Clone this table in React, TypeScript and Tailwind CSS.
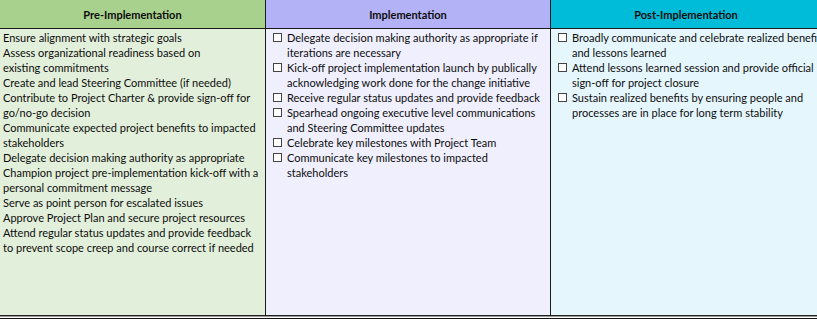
import React from "react";

// each entry is one bullet, each string inside is one printed line
const pre: string[][] = [
  ["Ensure alignment with strategic goals"],
  ["Assess organizational readiness based on", "existing commitments"],
  ["Create and lead Steering Committee (if needed)"],
  ["Contribute to Project Charter & provide sign-off for", "go/no-go decision"],
  ["Communicate expected project benefits to impacted", "stakeholders"],
  ["Delegate decision making authority as appropriate"],
  ["Champion project pre-implementation kick-off with a", "personal commitment message"],
  ["Serve as point person for escalated issues"],
  ["Approve Project Plan and secure project resources"],
  ["Attend regular status updates and provide feedback", "to prevent scope creep and course correct if needed"],
];

const impl: string[][] = [
  ["Delegate decision making authority as appropriate if", "iterations are necessary"],
  ["Kick-off project implementation launch by publically", "acknowledging work done for the change initiative"],
  ["Receive regular status updates and provide feedback"],
  ["Spearhead ongoing executive level communications", "and Steering Committee updates"],
  ["Celebrate key milestones with Project Team"],
  ["Communicate key milestones to impacted", "stakeholders"],
];

const post: string[][] = [
  ["Broadly communicate and celebrate realized benefits", "and lessons learned"],
  ["Attend lessons learned session and provide official", "sign-off for project closure"],
  ["Sustain realized benefits by ensuring people and", "processes are in place for long term stability"],
];

function Lines({ lines }: { lines: string[] }) {
  return (
    <span className="flex flex-col">
      {lines.map((l, i) => (
        <span key={i} className="whitespace-nowrap">
          {l}
        </span>
      ))}
    </span>
  );
}

function CheckItem({ lines }: { lines: string[] }) {
  return (
    <li className="flex items-start">
      <span className="mt-[3px] mr-[5px] w-[9px] h-[9px] shrink-0 border border-[#444] bg-white" />
      <Lines lines={lines} />
    </li>
  );
}

export default function App() {
  return (
    <div
      className="w-[817px] h-[319px] overflow-hidden bg-white text-[#0d0d0d] text-[11px] leading-[15px]"
      style={{ fontFamily: "Lato, 'Open Sans', sans-serif" }}
    >
      <div className="w-[822px] grid grid-cols-[266px_285px_271px] grid-rows-[29px_286px] border-b border-[#222]">
        {/* Header row */}
        <div className="bg-[#a9d18e] border-b border-r border-[#1a1a1a] flex items-center justify-center font-bold">
          Pre-Implementation
        </div>
        <div className="bg-[#b4b2f7] border-b border-r border-[#1a1a1a] flex items-center justify-center font-bold">
          Implementation
        </div>
        <div className="bg-[#00bcd8] border-b border-r border-[#1a1a1a] flex items-center justify-center font-bold">
          Post-Implementation
        </div>

        {/* Body row */}
        <div className="bg-[#e2efda] border-r border-[#1a1a1a] pl-[3px] pt-[1px] overflow-hidden">
          <ul>
            {pre.map((l, i) => (
              <li key={i}>
                <Lines lines={l} />
              </li>
            ))}
          </ul>
        </div>
        <div className="bg-[#efeffd] border-r border-[#1a1a1a] pl-[7px] pt-[1px] overflow-hidden">
          <ul>
            {impl.map((l, i) => (
              <CheckItem key={i} lines={l} />
            ))}
          </ul>
        </div>
        <div className="bg-[#e5f6fd] border-r border-[#1a1a1a] pl-[7px] pt-[1px] overflow-hidden">
          <ul>
            {post.map((l, i) => (
              <CheckItem key={i} lines={l} />
            ))}
          </ul>
        </div>
      </div>
      <div className="h-[1px] bg-[#9a9a9a]" />
      <div className="h-[1px] bg-white" />
      <div className="h-[1px] bg-[#111]" />
    </div>
  );
}
